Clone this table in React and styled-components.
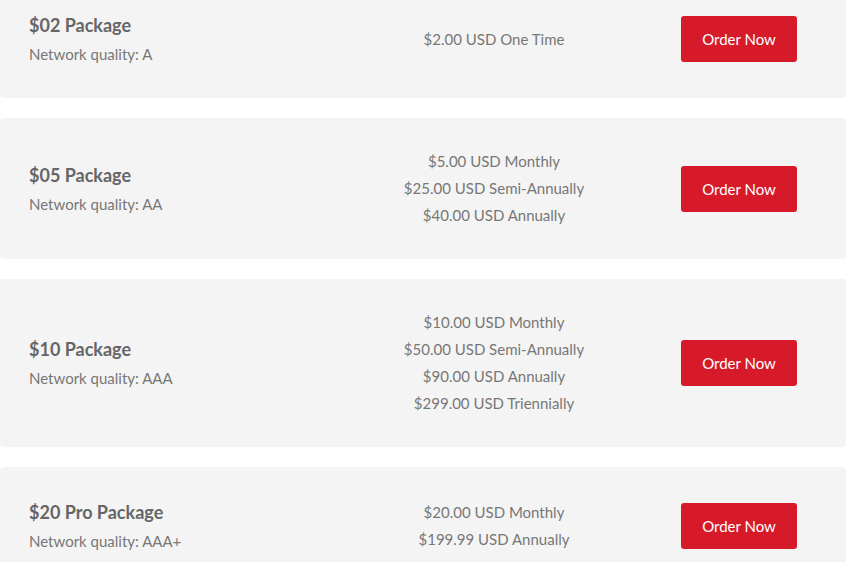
import React from "react";
import styled, { createGlobalStyle } from "styled-components";

const GlobalStyle = createGlobalStyle`
  html, body {
    margin: 0;
    padding: 0;
    background: #ffffff;
    font-family: Lato, "Liberation Sans", sans-serif;
    overflow: hidden;
  }
`;

const packages = [
  {
    name: "$02 Package",
    quality: "A",
    prices: ["$2.00 USD One Time"],
  },
  {
    name: "$05 Package",
    quality: "AA",
    prices: [
      "$5.00 USD Monthly",
      "$25.00 USD Semi-Annually",
      "$40.00 USD Annually",
    ],
  },
  {
    name: "$10 Package",
    quality: "AAA",
    prices: [
      "$10.00 USD Monthly",
      "$50.00 USD Semi-Annually",
      "$90.00 USD Annually",
      "$299.00 USD Triennially",
    ],
  },
  {
    name: "$20 Pro Package",
    quality: "AAA+",
    prices: ["$20.00 USD Monthly", "$199.99 USD Annually"],
  },
];

// page is scrolled a little, first card is cut at the top
const PackageList = styled.div`
  width: 846px;
  margin-top: -20px;
  display: flex;
  flex-direction: column;
  gap: 20px;
`;

const PackageCard = styled.div`
  background: #f4f4f4;
  border-radius: 4px;
  padding: 30px 29px;
  display: grid;
  grid-template-columns: 1fr 334px 156px;
  align-items: center;
`;

const InfoBox = styled.div`
  display: flex;
  flex-direction: column;
`;

const PackageName = styled.h3`
  margin: 0;
  font-size: 18px;
  font-weight: 700;
  line-height: 30px;
  color: #666666;
`;

const Quality = styled.p`
  margin: 0;
  font-size: 15px;
  line-height: 28px;
  color: #777777;
`;

const PriceList = styled.div`
  display: flex;
  flex-direction: column;
  align-items: center;
`;

const Price = styled.span`
  font-size: 15px;
  line-height: 27px;
  color: #777777;
`;

const ButtonCell = styled.div`
  display: flex;
  justify-content: center;
`;

const OrderButton = styled.a`
  display: flex;
  align-items: center;
  justify-content: center;
  width: 116px;
  height: 46px;
  box-sizing: border-box;
  background: #d71a2a;
  border-radius: 3px;
  color: #ffffff;
  font-size: 15px;
  text-decoration: none;
  cursor: pointer;
`;

const App = () => {
  return (
    <>
      <GlobalStyle />
      <PackageList>
        {packages.map((pkg) => (
          <PackageCard key={pkg.name}>
            <InfoBox>
              <PackageName>{pkg.name}</PackageName>
              <Quality>Network quality: {pkg.quality}</Quality>
            </InfoBox>
            <PriceList>
              {pkg.prices.map((price) => (
                <Price key={price}>{price}</Price>
              ))}
            </PriceList>
            <ButtonCell>
              <OrderButton>Order Now</OrderButton>
            </ButtonCell>
          </PackageCard>
        ))}
      </PackageList>
    </>
  );
};

export default App;
